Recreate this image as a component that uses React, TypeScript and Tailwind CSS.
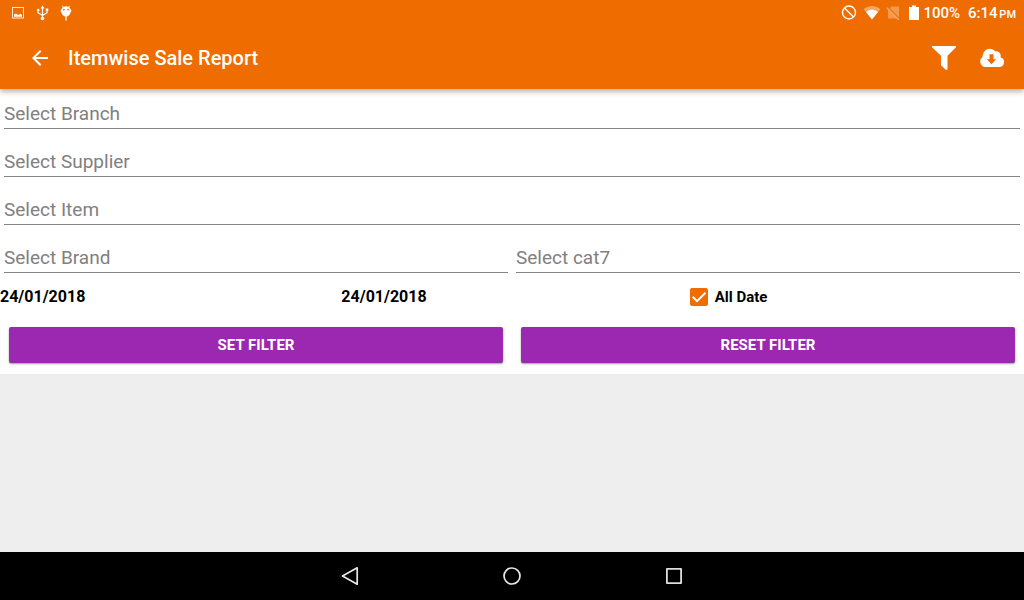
import { useState } from 'react';
import type { ReactNode } from 'react';

function StatusBar() {
  return (
    <div className="flex h-6 items-center justify-between pt-0.5 pr-2 pl-2.5 text-white">
      <div className="flex items-center gap-2">
        <svg className="size-4" viewBox="0 0 16 16" fill="none">
          <rect x="2.500" y="2.500" width="11" height="10.500" stroke="#fff" strokeOpacity=".85" />
          <path d="M4 11.800V9.500L6 8.500l2 1.500 2.500-1.200L12 10v1.800z" fill="#fff" />
        </svg>
        <svg className="size-4" viewBox="0 0 16 16" fill="none" stroke="#fff" strokeWidth="1.200">
          <path d="M8.500 3v10M4 5.500v2.200l4.500 2.800M13 5.500v2.200l-4.500 2.800" />
          <path d="M8.500 .5l2 3h-4z" fill="#fff" stroke="none" />
          <circle cx="4.200" cy="5" r="1.300" fill="#fff" stroke="none" />
          <path d="M11.800 3.500h2.500V6h-2.500z" fill="#fff" stroke="none" />
          <circle cx="8.500" cy="13.500" r="1.800" fill="#fff" stroke="none" />
        </svg>
        <svg className="size-4" viewBox="0 0 16 16">
          <path d="M4 .5l1.600 1.300a5 5 0 0 1 4.800 0L12 .5l-.6 2.200c.8.6 1.300 1.400 1.400 2.100h.4v2.200h-.5c-.5 2.500-2.300 4.500-4.700 4.500S3.800 9.500 3.300 7h-.5V4.800h.4c.1-.7.6-1.500 1.400-2.100z" fill="#fff" />
          <path d="M7.200 11h1.600v4.500H7.200z" fill="#fff" fillOpacity=".85" />
          <circle cx="5.900" cy="4.600" r=".9" fill="#ef6c00" />
          <circle cx="10.100" cy="4.600" r=".9" fill="#ef6c00" />
        </svg>
      </div>
      <div className="flex items-center">
        <svg className="mr-1.5 size-4" viewBox="0 0 16 16" fill="none" stroke="#fff" strokeWidth="1.400">
          <circle cx="8" cy="7.500" r="6.500" />
          <path d="M3.500 3l9 9" />
        </svg>
        <svg className="mr-1 h-4 w-[18px]" viewBox="0 0 18 16" fill="#fff">
          <path d="M9 14.500.6 4a13 13 0 0 1 16.800 0z" fillOpacity=".4" />
          <path d="M9 14.500 3 7a9 9 0 0 1 12 0z" />
        </svg>
        <svg className="mr-2 size-4" viewBox="0 0 16 16">
          <path d="M6.500 1.500H14v12H3V5z" fill="#fff" fillOpacity=".3" />
          <path d="M2.800 2.200 14.800 14.200" stroke="#ef6c00" strokeWidth="1.400" />
          <path d="M1.800 2.800 13.800 14.800" stroke="#f8a868" strokeWidth="1.300" />
        </svg>
        <svg className="mr-1 h-4 w-2.5" viewBox="0 0 10 16" fill="#fff">
          <path d="M3 .5h4V2h3v13H0V2h3z" />
        </svg>
        <span className="text-[15px] font-medium">100%</span>
        <span className="ml-2 text-[15px] font-medium">
          6:14 <span className="-ml-0.5 text-[11px]">PM</span>
        </span>
      </div>
    </div>
  );
}

function AppBar() {
  return (
    <div className="flex h-[65px] items-center pt-0.5 pr-5 pl-7 text-white">
      <button type="button" aria-label="Back" className="mr-4">
        <svg className="size-6" viewBox="0 0 24 24" fill="#fff">
          <path d="M20 11H7.830l5.590-5.590L12 4l-8 8 8 8 1.410-1.410L7.830 13H20v-2z" />
        </svg>
      </button>
      <h1 className="flex-1 text-xl leading-7 font-medium">Itemwise Sale Report</h1>
      <button type="button" aria-label="Filter" className="mr-6">
        <svg className="size-6" viewBox="0 0 24 24" fill="#fff">
          <path d="M0 0h24v1.200L15.500 9.800v13.500l-1.500.7-5-4.800V9.800L0 1.200z" />
        </svg>
      </button>
      <button type="button" aria-label="Download">
        <svg className="size-6" viewBox="0 0 24 24" fill="#fff">
          <path
            fillRule="evenodd"
            d="M5.500 21A5.500 5.500 0 0 1 2.300 11.200 7 7 0 0 1 3 8.500 7 7 0 0 1 15.300 5.300 4.600 4.600 0 0 1 20.500 11.200 5 5 0 0 1 19 21zM9.500 8.200v5H6.800l4.700 5 4.700-5h-2.700v-5z"
          />
        </svg>
      </button>
    </div>
  );
}

function Field({ label }: { label: string }) {
  return (
    <div className="h-12 flex-1 px-1 pt-2">
      <input
        type="text"
        aria-label={label}
        placeholder={label}
        className="block h-8 w-full border-b border-[#858585] bg-transparent pt-px text-[19px] text-black outline-none placeholder:text-[#808080]"
      />
    </div>
  );
}

function RaisedButton({ children }: { children: ReactNode }) {
  return (
    <button
      type="button"
      className="h-9 flex-1 rounded-xs bg-[#9c27b0] text-[15px] font-bold text-white uppercase shadow-[0_1px_2px_rgba(0,0,0,0.4)]"
    >
      {children}
    </button>
  );
}

function NavBar() {
  return (
    <nav className="flex h-12 items-center justify-center gap-[138px] bg-black">
      <button type="button" aria-label="Back">
        <svg className="size-6" viewBox="0 0 24 24" fill="none" stroke="#e8e8e8" strokeWidth="1.700" strokeLinejoin="round">
          <path d="M19.200 3.800v16.400L4.500 12z" />
        </svg>
      </button>
      <button type="button" aria-label="Home">
        <svg className="size-6" viewBox="0 0 24 24" fill="none" stroke="#e8e8e8" strokeWidth="1.700">
          <circle cx="12" cy="12" r="8" />
        </svg>
      </button>
      <button type="button" aria-label="Recent apps">
        <svg className="size-6" viewBox="0 0 24 24" fill="none" stroke="#dedede" strokeWidth="1.800" strokeLinejoin="round">
          <rect x="4.900" y="4.900" width="14.200" height="14.200" />
        </svg>
      </button>
    </nav>
  );
}

export default function App() {
  const [allDate, setAllDate] = useState(true);

  return (
    <div className="flex min-h-screen flex-col bg-[#eeeeee] font-[Roboto,sans-serif]">
      <header className="z-10 bg-[#ef6c00] shadow-[0_3px_5px_rgba(0,0,0,0.28)]">
        <StatusBar />
        <AppBar />
      </header>

      <main className="flex-1">
        <form className="bg-white pb-[11px]">
          <div className="flex"><Field label="Select Branch" /></div>
          <div className="flex"><Field label="Select Supplier" /></div>
          <div className="flex"><Field label="Select Item" /></div>
          <div className="flex">
            <Field label="Select Brand" />
            <Field label="Select cat7" />
          </div>
          <div className="grid h-8 grid-cols-3 items-center text-[15px] font-bold text-black">
            <button type="button" className="text-left text-base">24/01/2018</button>
            <button type="button" className="text-left text-base">24/01/2018</button>
            <label className="flex items-center gap-[7px] pl-[7px]">
              <span className="grid">
                <input
                  type="checkbox"
                  checked={allDate}
                  onChange={e => setAllDate(e.target.checked)}
                  className="peer col-start-1 row-start-1 size-[18px] appearance-none rounded-xs border-2 border-[#ef6c00] checked:bg-[#ef6c00]"
                />
                <svg
                  className="pointer-events-none invisible col-start-1 row-start-1 size-[18px] peer-checked:visible"
                  viewBox="0 0 18 18"
                  fill="none"
                  stroke="#fff"
                  strokeWidth="2"
                >
                  <path d="M2.700 8.800 7 13.200l8.500-8.500" />
                </svg>
              </span>
              All Date
            </label>
          </div>
          <div className="mt-[14px] flex gap-[18px] px-[9px]">
            <RaisedButton>Set Filter</RaisedButton>
            <RaisedButton>Reset Filter</RaisedButton>
          </div>
        </form>
      </main>

      <NavBar />
    </div>
  );
}
